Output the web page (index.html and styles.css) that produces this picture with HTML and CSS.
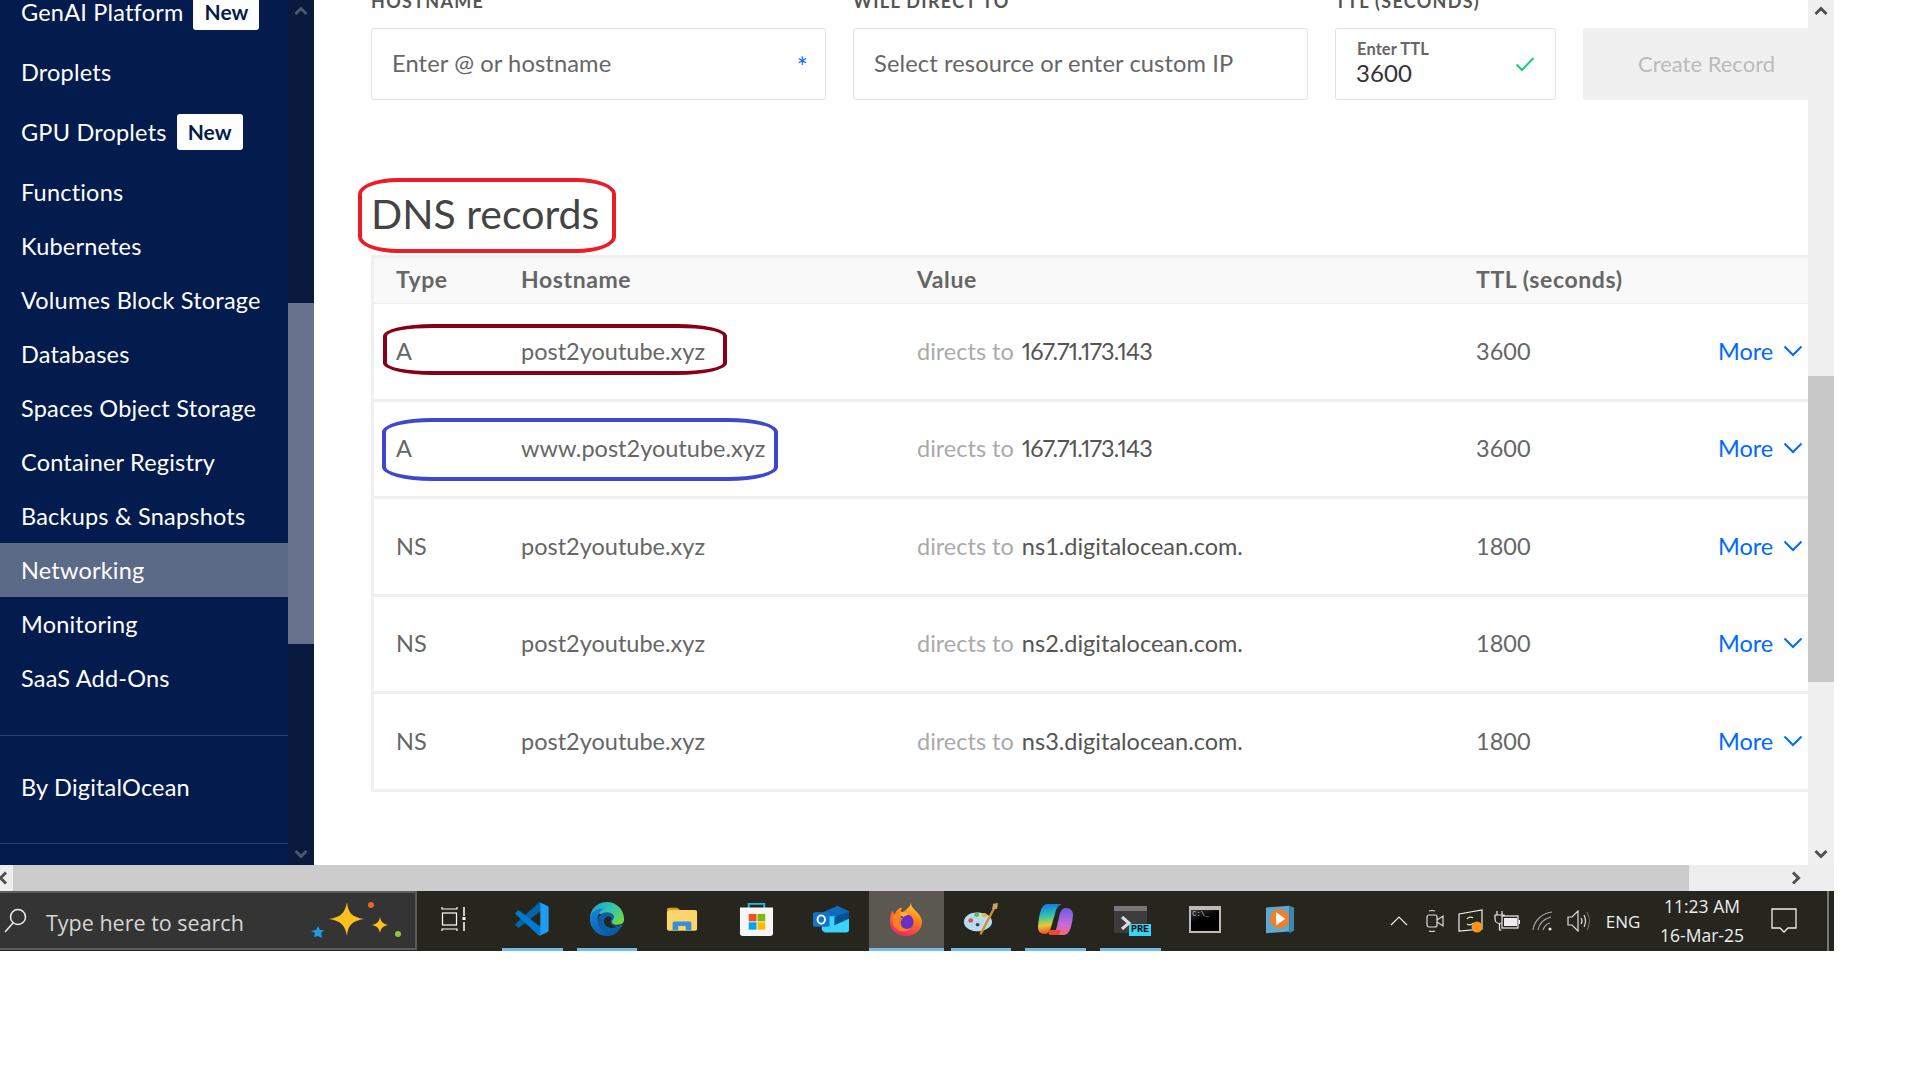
FILE: index.html
```html
<!DOCTYPE html>
<html>

<head>
    <title>DNS records</title>
    <link rel="stylesheet" href="styles.css">
</head>

<body>
    <div class="window">
        <div class="work">
            <nav class="sidebar">
                <ul class="nav-list">
                    <li class="nav-item">GenAI Platform <span class="badge">New</span></li>
                    <li class="nav-item">Droplets</li>
                    <li class="nav-item">GPU Droplets <span class="badge">New</span></li>
                    <li class="nav-item">Functions</li>
                    <li class="nav-item">Kubernetes</li>
                    <li class="nav-item">Volumes Block Storage</li>
                    <li class="nav-item">Databases</li>
                    <li class="nav-item">Spaces Object Storage</li>
                    <li class="nav-item">Container Registry</li>
                    <li class="nav-item">Backups &amp; Snapshots</li>
                    <li class="nav-item active">Networking</li>
                    <li class="nav-item">Monitoring</li>
                    <li class="nav-item">SaaS Add-Ons</li>
                </ul>
                <div class="nav-footer">By DigitalOcean</div>
            </nav>
            <div class="side-scroll">
                <svg class="arrow-up" width="14" height="10" viewBox="0 0 14 10"><path d="M1.5 8 7 2.5 12.5 8" fill="none" stroke="#4d5872" stroke-width="3"/></svg>
                <div class="side-thumb"></div>
                <svg class="arrow-down" width="14" height="10" viewBox="0 0 14 10"><path d="M1.5 2 7 7.5 12.5 2" fill="none" stroke="#4d5872" stroke-width="3"/></svg>
            </div>

            <main class="main">
                <form class="record-form">
                    <div class="field">
                        <div class="field-label">HOSTNAME</div>
                        <div class="input-box">Enter @ or hostname <span class="required">*</span></div>
                    </div>
                    <div class="field">
                        <div class="field-label">WILL DIRECT TO</div>
                        <div class="input-box"><span class="clip-text">Select resource or enter custom IP</span></div>
                    </div>
                    <div class="field">
                        <div class="field-label">TTL (SECONDS)</div>
                        <div class="input-box ttl">
                            <div>
                                <div class="ttl-label">Enter TTL</div>
                                <div class="ttl-value">3600</div>
                            </div>
                            <svg width="20" height="16" viewBox="0 0 20 16"><path d="M1.5 8.5 7 14 18.5 2" fill="none" stroke="#15cd72" stroke-width="2"/></svg>
                        </div>
                    </div>
                    <div class="field">
                        <div class="field-label">&nbsp;</div>
                        <div class="create-btn">Create Record</div>
                    </div>
                </form>

                <h2 class="section-title">DNS records</h2>

                <div class="records">
                    <div class="row head">
                        <div>Type</div>
                        <div>Hostname</div>
                        <div>Value</div>
                        <div>TTL (seconds)</div>
                        <div></div>
                    </div>
                    <div class="row">
                        <div>A</div>
                        <div>post2youtube.xyz</div>
                        <div><span class="muted">directs to</span> <span class="value ip">167.71.173.143</span></div>
                        <div>3600</div>
                        <div class="more">More <svg width="20" height="12" viewBox="0 0 20 12"><path d="M1.5 1.5 10 10 18.5 1.5" fill="none" stroke="#0069ff" stroke-width="2"/></svg></div>
                    </div>
                    <div class="row">
                        <div>A</div>
                        <div>www.post2youtube.xyz</div>
                        <div><span class="muted">directs to</span> <span class="value ip">167.71.173.143</span></div>
                        <div>3600</div>
                        <div class="more">More <svg width="20" height="12" viewBox="0 0 20 12"><path d="M1.5 1.5 10 10 18.5 1.5" fill="none" stroke="#0069ff" stroke-width="2"/></svg></div>
                    </div>
                    <div class="row">
                        <div>NS</div>
                        <div>post2youtube.xyz</div>
                        <div><span class="muted">directs to</span> <span class="value">ns1.digitalocean.com.</span></div>
                        <div>1800</div>
                        <div class="more">More <svg width="20" height="12" viewBox="0 0 20 12"><path d="M1.5 1.5 10 10 18.5 1.5" fill="none" stroke="#0069ff" stroke-width="2"/></svg></div>
                    </div>
                    <div class="row">
                        <div>NS</div>
                        <div>post2youtube.xyz</div>
                        <div><span class="muted">directs to</span> <span class="value">ns2.digitalocean.com.</span></div>
                        <div>1800</div>
                        <div class="more">More <svg width="20" height="12" viewBox="0 0 20 12"><path d="M1.5 1.5 10 10 18.5 1.5" fill="none" stroke="#0069ff" stroke-width="2"/></svg></div>
                    </div>
                    <div class="row">
                        <div>NS</div>
                        <div>post2youtube.xyz</div>
                        <div><span class="muted">directs to</span> <span class="value">ns3.digitalocean.com.</span></div>
                        <div>1800</div>
                        <div class="more">More <svg width="20" height="12" viewBox="0 0 20 12"><path d="M1.5 1.5 10 10 18.5 1.5" fill="none" stroke="#0069ff" stroke-width="2"/></svg></div>
                    </div>
                </div>

                <!-- hand drawn marks on top of the screenshot -->
                <div class="mark mark-red"></div>
                <div class="mark mark-maroon"></div>
                <div class="mark mark-blue"></div>
            </main>

            <div class="main-scroll">
                <svg class="arrow-up" width="14" height="10" viewBox="0 0 14 10"><path d="M1.5 8 7 2.5 12.5 8" fill="none" stroke="#505050" stroke-width="3"/></svg>
                <div class="main-thumb"></div>
                <svg class="arrow-down" width="14" height="10" viewBox="0 0 14 10"><path d="M1.5 2 7 7.5 12.5 2" fill="none" stroke="#505050" stroke-width="3"/></svg>
            </div>
        </div>

        <div class="hscroll">
            <div class="hscroll-btn"><svg width="10" height="14" viewBox="0 0 10 14"><path d="M8 1.5 2.5 7 8 12.5" fill="none" stroke="#505050" stroke-width="3"/></svg></div>
            <div class="hscroll-thumb"></div>
            <div class="hscroll-end"><svg width="10" height="14" viewBox="0 0 10 14"><path d="M2 1.5 7.5 7 2 12.5" fill="none" stroke="#505050" stroke-width="3"/></svg></div>
        </div>

        <footer class="taskbar">
            <div class="search">
                <svg class="search-icon" width="26" height="30" viewBox="0 0 26 30"><circle cx="16" cy="11" r="7.5" fill="none" stroke="#eee" stroke-width="1.5"/><path d="M11 17 3 26" stroke="#eee" stroke-width="1.5"/></svg>
                <span class="search-text">Type here to search</span>
                <svg class="sparkle" width="100" height="50" viewBox="311 897 100 50">
                    <path d="M347 903C348 914 352 918 364 920C352 922 348 926 347 937C345 926 341 922 329 920C341 918 345 914 347 903Z" fill="#fcc21b"/>
                    <path d="M380 918C381 923 383 925 388 926C383 927 381 929 380 934C379 929 377 927 372 926C377 925 379 923 380 918Z" fill="#fcc21b"/>
                    <path d="M318 927 320 931 324 931 321 934 322 939 318 937 314 938 315 934 311 932 316 931Z" fill="#1e9ce8"/>
                    <circle cx="371" cy="906" r="3" fill="#e8622a"/>
                    <circle cx="398" cy="935" r="3" fill="#8cc63f"/>
                </svg>
            </div>

            <div class="task-icons">
                <div class="task-slot view">
                    <svg width="26" height="26" viewBox="0 0 26 26" fill="none" stroke="#fff" stroke-width="1.2"><path d="M1 1v2h15V1M1 25v-2h15v2"/><rect x="1.5" y="7" width="14" height="12"/><path d="M23 1v9M23 16v9" stroke-width="1.5"/><rect x="21.5" y="11" width="3" height="3" fill="#fff" stroke="none"/></svg>
                </div>
                <div class="task-slot open">
                    <svg width="38" height="38" viewBox="0 0 32 32"><path d="M29.01 5.03 23.244 2.254a1.742 1.742 0 0 0-1.989.338L2.38 19.8a1.166 1.166 0 0 0 0 1.723l1.543 1.4a1.165 1.165 0 0 0 1.489.066L28.142 5.75A1.158 1.158 0 0 1 30 6.672v-.067a1.748 1.748 0 0 0-.99-1.575Z" fill="#0065a9"/><path d="m29.01 26.97-5.766 2.777a1.745 1.745 0 0 1-1.989-.338L2.38 12.2a1.166 1.166 0 0 1 0-1.723l1.543-1.4a1.165 1.165 0 0 1 1.489-.066l22.73 17.239A1.158 1.158 0 0 0 30 25.328v.067a1.75 1.75 0 0 1-.99 1.575Z" fill="#007acc"/><path d="M23.244 29.747a1.745 1.745 0 0 1-1.989-.338A1.025 1.025 0 0 0 23 28.684V3.316a1.024 1.024 0 0 0-1.75-.724 1.744 1.744 0 0 1 1.989-.339l5.765 2.772A1.748 1.748 0 0 1 30 6.6v18.8a1.748 1.748 0 0 1-.991 1.576Z" fill="#1f9cf0"/></svg>
                </div>
                <div class="task-slot open">
                    <svg width="38" height="38" viewBox="0 0 40 40">
                        <defs>
                            <linearGradient id="edgeTop" x1="0" y1="0" x2="1" y2="0.7"><stop offset="0" stop-color="#1a9fd8"/><stop offset="0.55" stop-color="#36c3b0"/><stop offset="1" stop-color="#6bd948"/></linearGradient>
                            <linearGradient id="edgeLow" x1="0" y1="0" x2="0.6" y2="1"><stop offset="0" stop-color="#1689dd"/><stop offset="1" stop-color="#0a5aa8"/></linearGradient>
                        </defs>
                        <path d="M2 20C2 9 10 2 20 2C30 2 38 10 38 20C38 24 36 26 31 26C26 26 24 24 25 22C27 19 24 15 18 15C11 15 2 12 2 20Z" fill="url(#edgeTop)"/>
                        <path d="M2 20C2 12 10 8 17 9C11 12 9 19 11 25C14 34 27 37 34 30C31 35 26 38 20 38C10 38 2 30 2 20Z" fill="url(#edgeLow)"/>
                        <path d="M11 25C9 17 15 12 21 13C27 14 29 18 26 21C24 24 26 27 32 27C34 27 36 26 37 25C36 28 35 29 34 30C27 37 14 34 11 25Z" fill="#0d5ea8"/>
                        <path d="M17 24C16 19 20 16 24 18C25 19 25 20 24 22C23 25 26 28 31 28C25 31 18 29 17 24Z" fill="#26251e"/>
                    </svg>
                </div>
                <div class="task-slot">
                    <svg width="32" height="26" viewBox="0 0 34 30" preserveAspectRatio="none"><path d="M1 4a2 2 0 0 1 2-2h9l3 3h-14Z" fill="#e0a30e"/><rect x="1" y="4.5" width="32" height="24" rx="2" fill="#fbd46a"/><path d="M7 28v-8a2 2 0 0 1 2-2h16a2 2 0 0 1 2 2v8h-6v-5h-8v5Z" fill="#3a8ed8"/></svg>
                </div>
                <div class="task-slot">
                    <svg width="35" height="35" viewBox="0 0 36 38" preserveAspectRatio="none"><path d="M10 7V2h16v5" fill="none" stroke="#29b6e8" stroke-width="2"/><path d="M1 6h34v28a3 3 0 0 1-3 3H4a3 3 0 0 1-3-3Z" fill="#f6f6f6"/><rect x="10" y="13" width="8" height="8" fill="#f25022"/><rect x="19" y="13" width="8" height="8" fill="#7fba00"/><rect x="10" y="22" width="8" height="8" fill="#00a4ef"/><rect x="19" y="22" width="8" height="8" fill="#ffb900"/></svg>
                </div>
                <div class="task-slot">
                    <svg width="37" height="31" viewBox="0 0 38 38" preserveAspectRatio="none"><path d="M7 12 25 2 37 9V16H7Z" fill="#0f6cbd"/><path d="M9 15H37V32a3 3 0 0 1-3 3H12l-3-3Z" fill="#3bd3f7"/><path d="M37 9V18L22 26V16Z" fill="#0a4f96"/><rect x="0" y="10" width="17" height="18" rx="2" fill="#1273c9"/><ellipse cx="8.5" cy="19" rx="3.8" ry="5" fill="none" stroke="#fff" stroke-width="2"/></svg>
                </div>
                <div class="task-slot open current">
                    <svg width="34" height="36" viewBox="0 0 36 38" preserveAspectRatio="none">
                        <defs>
                            <linearGradient id="fox" x1="0.7" y1="0" x2="0.3" y2="1"><stop offset="0" stop-color="#ffd52e"/><stop offset="0.45" stop-color="#ff7a1a"/><stop offset="1" stop-color="#f01f6e"/></linearGradient>
                        </defs>
                        <path d="M23 1C23 5 25 7 29 11C33 15 35 19 35 22C35 31 27 37 18 37C8 37 1 30 1 21C1 17 2 13 4 10C4 12 5 13 6 14C8 9 11 7 14 7C12 9 12 11 14 12C18 9 23 7 23 1Z" fill="url(#fox)"/>
                        <circle cx="18" cy="22" r="8" fill="#6a2fc0"/>
                        <path d="M4 17C7 13 11 12 14 14C11 16 12 18 15 18C20 18 25 20 24 26C23 31 16 34 10 31C5 28 3 23 4 17Z" fill="#ff8a1e" opacity="0.85"/>
                        <circle cx="19" cy="23" r="6.5" fill="#6a2fc0"/>
                        <path d="M11 13C14 11 18 11 21 14L15 17Z" fill="#ffb02e"/>
                    </svg>
                </div>
                <div class="task-slot open">
                    <svg width="35" height="35" viewBox="0 0 36 40" preserveAspectRatio="none"><path d="M16 12C7 11 0 17 1 24C2 31 11 35 19 33C27 31 32 25 29 19C27 14 22 13 16 12Z" fill="#b8dcee"/><circle cx="8" cy="21" r="2.5" fill="#d8534a"/><circle cx="14" cy="14.5" r="2.5" fill="#6cb33f"/><circle cx="22" cy="15" r="2.5" fill="#e8b92e"/><circle cx="15" cy="26" r="2" fill="#444"/><path d="M33 5 18 37" stroke="#d98a2b" stroke-width="2.5"/><path d="M30 8 31 2 36 1 35 8Z" fill="#c8a26a"/></svg>
                </div>
                <div class="task-slot open">
                    <svg width="37" height="33" viewBox="0 0 37 33">
                        <defs>
                            <linearGradient id="coA" x1="0.3" y1="0" x2="0.4" y2="1"><stop offset="0" stop-color="#1278e0"/><stop offset="0.4" stop-color="#2fc4b2"/><stop offset="0.7" stop-color="#e8c92e"/><stop offset="1" stop-color="#f0482e"/></linearGradient>
                            <linearGradient id="coB" x1="0.5" y1="0" x2="0.5" y2="1"><stop offset="0" stop-color="#6a5ce8"/><stop offset="0.6" stop-color="#c86ad8"/><stop offset="1" stop-color="#f06a7a"/></linearGradient>
                        </defs>
                        <path d="M10 1H25C21 2 19 6 18 11L14 24C13 28 11 31 8 31C3 31 1 28 1 24C2 12 4 1 10 1Z" fill="url(#coA)"/>
                        <path d="M27 32H13C17 31 19 28 20 23L23 10C24 7 26 5 29 5C34 5 36 8 36 12C35 22 33 32 27 32Z" fill="url(#coB)"/>
                        <path d="M12 27H24L22 32H13C11 31 11 29 12 27Z" fill="#f0482e"/>
                    </svg>
                </div>
                <div class="task-slot open">
                    <div class="term-icon">
                        <span class="term-bar"></span>
                        <svg width="12" height="14" viewBox="0 0 12 14"><path d="M2 1 9 7 2 13" fill="none" stroke="#ddd" stroke-width="3"/></svg>
                        <span class="term-tag">PRE</span>
                    </div>
                </div>
                <div class="task-slot">
                    <div class="cmd-icon"><span class="cmd-title"></span><span class="cmd-text">C:\_</span></div>
                </div>
                <div class="task-slot">
                    <svg width="29" height="29" viewBox="0 0 30 36" preserveAspectRatio="none"><path d="M0 3 24 1V33L0 35Z" fill="#5fa8cf"/><path d="M24 1 29 3V32L24 35Z" fill="#3f87ae"/><ellipse cx="14" cy="17" rx="10" ry="12" fill="#ef7f2c"/><path d="M10.5 9 20 17 10.5 25Z" fill="#fff"/></svg>
                </div>
            </div>

            <div class="tray">
                <div class="tray-slot"><svg width="18" height="10" viewBox="0 0 18 10"><path d="M1 9 9 1 17 9" fill="none" stroke="#eee" stroke-width="1.2"/></svg></div>
                <div class="tray-slot"><svg width="18" height="24" viewBox="0 0 18 24" fill="none" stroke="#ddd" stroke-width="1.2"><rect x="1" y="6" width="10" height="12" rx="2"/><path d="M11 11 17 7V17L11 13M3 2Q6 1 9 2M3 22Q6 23 9 22"/></svg></div>
                <div class="tray-slot"><svg width="26" height="24" viewBox="0 0 26 24"><path d="M1 5 24 1V20L1 22Z" fill="none" stroke="#eee" stroke-width="1.2"/><path d="M9 10a4 4 0 0 1 6-1M15 14a4 4 0 0 1-6 1" fill="none" stroke="#ddd" stroke-width="1.2"/><circle cx="19" cy="18" r="5.5" fill="#f7941d"/></svg></div>
                <div class="tray-slot"><svg width="26" height="20" viewBox="0 0 26 20"><path d="M3 0v4M8 0v4M1 4h9v4a4 4 0 0 1-9 0ZM5.5 12v7h2" fill="none" stroke="#eee" stroke-width="1.2"/><rect x="8" y="5" width="16" height="12" fill="#26251e" stroke="#eee" stroke-width="1.2"/><rect x="10" y="7" width="13" height="8" fill="#eee"/><rect x="24.5" y="9" width="1.5" height="4" fill="#eee"/></svg></div>
                <div class="tray-slot"><svg width="22" height="20" viewBox="0 0 22 20" fill="none" stroke="#aaa" stroke-width="1.1"><path d="M1 19C2 10 10 2 20 1M6 19C7 13 12 8 19 6M11 19C12 16 14 13 18 12"/><circle cx="18" cy="18" r="1.5" fill="#eee" stroke="none"/></svg></div>
                <div class="tray-slot"><svg width="24" height="22" viewBox="0 0 24 22" fill="none" stroke="#ddd" stroke-width="1.2"><path d="M1 7H5L11 1V21L5 15H1Z"/><path d="M14 8Q16 11 14 14M17 5Q20 11 17 17"/><path d="M20 2Q25 11 20 20" stroke="#666"/></svg></div>
                <div class="tray-lang">ENG</div>
                <div class="clock">
                    <div>11:23 AM</div>
                    <div>16-Mar-25</div>
                </div>
                <div class="notify"><svg width="26" height="26" viewBox="0 0 26 26"><path d="M1 1H25V20H17L13 24 9 20H1Z" fill="none" stroke="#eee" stroke-width="1.3"/></svg></div>
                <div class="peek"></div>
            </div>
        </footer>
    </div>
</body>

</html>
```

FILE: styles.css
```css
* {
    box-sizing: border-box;
}

body {
    margin: 0;
    background: #fff;
    font-family: "Lato", "Liberation Sans", sans-serif;
}

.window {
    width: 1834px;
    height: 951px;
    display: flex;
    flex-direction: column;
}

.work {
    height: 865px;
    display: flex;
    overflow: hidden;
}

/* sidebar */
.sidebar {
    width: 288px;
    background-color: #031b4d;
    color: #fff;
    font-size: 23.5px;
    letter-spacing: 0.2px;
    flex-shrink: 0;
}

.nav-list {
    list-style: none;
    margin: -21px 0 0 0;
    padding: 0;
}

.nav-item {
    display: flex;
    align-items: center;
    gap: 10px;
    padding: 15px 21px;
    line-height: 24px;
    white-space: nowrap;
}

.nav-item.active {
    background-color: #5a6a87;
}

.badge {
    display: block;
    width: 66px;
    height: 36px;
    line-height: 36px;
    text-align: center;
    background: #fff;
    color: #031b4d;
    font-size: 21px;
    font-weight: 700;
    letter-spacing: 0;
    border-radius: 3px;
}

.nav-footer {
    margin-top: 30px;
    height: 109px;
    padding: 39px 21px 0;
    line-height: 24px;
    border-top: 1px solid #2c4068;
    border-bottom: 1px solid #2c4068;
}

.side-scroll,
.main-scroll {
    width: 26px;
    flex-shrink: 0;
    display: flex;
    flex-direction: column;
    align-items: center;
}

.side-scroll {
    background-color: #0a1a3f;
}

.main-scroll {
    background-color: #f0f0f0;
}

.arrow-up {
    position: absolute;
    margin-top: 6px;
}

.arrow-down {
    margin-top: auto;
    margin-bottom: 6px;
}

.side-thumb {
    margin-top: 303px;
    width: 100%;
    height: 341px;
    background-color: #67738c;
}

.main-thumb {
    margin-top: 376px;
    width: 100%;
    height: 306px;
    background-color: #c8c8c8;
}

/* main panel */
.main {
    position: relative;
    flex: 1;
    min-width: 0;
    padding-left: 57px;
    overflow: hidden;
    background: #fff;
}

.record-form {
    display: grid;
    grid-template-columns: 455px 455px 221px 260px;
    gap: 27px;
    margin-top: -9px;
}

.field-label {
    height: 20px;
    line-height: 20px;
    margin-bottom: 17px;
    font-size: 18px;
    font-weight: 700;
    letter-spacing: 1.3px;
    color: #555;
    white-space: nowrap;
}

.input-box {
    height: 72px;
    display: flex;
    align-items: center;
    justify-content: space-between;
    padding: 0 17px 2px 20px;
    border: 1px solid #e2e2e2;
    border-radius: 3px;
    font-size: 23.7px;
    letter-spacing: 0.1px;
    color: #666;
    white-space: nowrap;
}

.clip-text {
    display: block;
    width: 359px;
    overflow: hidden;
}

.required {
    color: #0069ff;
    font-size: 26px;
    line-height: 1;
    padding-top: 8px;
}

.ttl {
    padding: 0 20px;
}

.ttl-label {
    font-size: 16.5px;
    font-weight: 700;
    line-height: 18px;
    margin-left: 1px;
    color: #666;
}

.ttl-value {
    font-size: 24px;
    line-height: 30px;
    color: #333;
}

.create-btn {
    height: 72px;
    line-height: 72px;
    padding-left: 55px;
    background-color: #f0f0f0;
    border-radius: 3px;
    font-size: 22px;
    color: #bbb;
}

.section-title {
    margin: 89px 0 16px 0;
    height: 50px;
    line-height: 50px;
    font-size: 41px;
    font-weight: 400;
    color: #444;
}

.records {
    border-left: 3px solid #f0f0f0;
    border-top: 3px solid #f0f0f0;
    font-size: 23.5px;
    color: #666;
}

.row {
    display: grid;
    grid-template-columns: 125px 396px 559px 242px 91px;
    align-items: center;
    height: 97.5px;
    padding: 0 0 1px 22px;
    border-bottom: 3px solid #f0f0f0;
    white-space: nowrap;
}

.row.head {
    height: 46px;
    padding-bottom: 3px;
    background-color: #f9f9f9;
    border-bottom: 1px solid #eee;
    font-weight: 700;
    font-size: 23px;
    letter-spacing: 0.6px;
}

.muted {
    color: #aaa;
    margin-right: 2px;
}

.value {
    color: #555;
}

.ip {
    font-variant-numeric: proportional-nums;
    letter-spacing: -0.8px;
}

.more {
    display: flex;
    align-items: center;
    gap: 10px;
    color: #0069ff;
}

/* the red and blue rings are on top of the page */
.mark {
    position: absolute;
    border-style: solid;
    border-width: 4px;
}

.mark-red {
    left: 44px;
    top: 178px;
    width: 258px;
    height: 75px;
    border-color: #ed1c24;
    border-radius: 40px / 16px;
}

.mark-maroon {
    left: 69px;
    top: 324px;
    width: 344px;
    height: 51px;
    border-color: #880015;
    border-radius: 50px / 12px;
}

.mark-blue {
    left: 68px;
    top: 418px;
    width: 396px;
    height: 63px;
    border-color: #3f48cc;
    border-radius: 50px / 14px;
}

/* bottom scrollbar */
.hscroll {
    height: 26px;
    display: flex;
}

.hscroll-btn {
    width: 13px;
    background-color: #eee;
    display: flex;
    align-items: center;
}

.hscroll-btn svg {
    margin-left: -2px;
}

.hscroll-thumb {
    width: 1676px;
    background-color: #ccc;
}

.hscroll-end {
    flex: 1;
    background-color: #eee;
    display: flex;
    align-items: center;
    justify-content: flex-end;
    padding-right: 33px;
}

/* taskbar */
.taskbar {
    height: 60px;
    display: flex;
    background-color: #26251e;
    color: #eee;
}

.search {
    width: 417px;
    height: 59px;
    display: flex;
    align-items: center;
    background-color: #343434;
    border: 2px solid #5c5c5c;
    border-left: none;
    flex-shrink: 0;
}

.search-icon {
    margin-left: 2px;
    flex-shrink: 0;
}

.search-text {
    margin-left: 18px;
    padding-top: 3px;
    font-family: "Open Sans", sans-serif;
    font-size: 21.5px;
    color: #d6d6d6;
    white-space: nowrap;
}

.sparkle {
    margin-left: auto;
    margin-right: 4px;
    flex-shrink: 0;
}

.task-icons {
    display: flex;
    margin-left: 3px;
}

.task-slot {
    position: relative;
    width: 74.8px;
    height: 60px;
    display: flex;
    align-items: center;
    justify-content: center;
    padding-bottom: 4px;
}

.task-slot.view {
    padding-right: 6px;
}

.task-slot.open::after {
    content: "";
    position: absolute;
    left: 7px;
    right: 7px;
    bottom: 0;
    height: 3px;
    background-color: #76b9ed;
}

.task-slot.current {
    background-color: #5a5850;
}

.task-slot.current::after {
    left: 0;
    right: 0;
}

.term-icon {
    position: relative;
    width: 33px;
    height: 27px;
    padding: 8px 0 0 6px;
    background-color: #3c3c3c;
    border-radius: 2px;
}

.term-bar {
    position: absolute;
    top: 0;
    left: 0;
    right: 0;
    height: 5px;
    background-color: #777;
}

.term-tag {
    position: absolute;
    right: -4px;
    bottom: -3px;
    width: 22px;
    height: 12px;
    line-height: 12px;
    text-align: center;
    background-color: #3bd3f7;
    color: #111;
    font-family: "Liberation Mono", monospace;
    font-size: 10px;
    font-weight: 700;
}

.cmd-icon {
    width: 32px;
    height: 27px;
    background: linear-gradient(160deg, #444 0%, #000 45%);
    border: 2px solid #bbb;
    color: #ccc;
    font-family: "Liberation Mono", monospace;
    font-size: 7px;
    line-height: 8px;
}

.cmd-title {
    display: block;
    height: 2px;
    background-color: #bbb;
}

.cmd-text {
    display: block;
    padding-left: 1px;
}

.tray {
    margin-left: auto;
    display: flex;
    align-items: center;
}

.tray-slot {
    width: 36px;
    display: flex;
    justify-content: center;
}

.tray-lang {
    width: 52px;
    text-align: center;
    font-family: "Open Sans", sans-serif;
    font-size: 17px;
}

.clock {
    width: 106px;
    text-align: center;
    font-family: "Open Sans", sans-serif;
    font-size: 17.5px;
    line-height: 29px;
}

.notify {
    width: 58px;
    display: flex;
    justify-content: center;
}

.peek {
    margin-left: 14px;
    width: 7px;
    height: 60px;
    border-left: 2px solid #777;
}
```
